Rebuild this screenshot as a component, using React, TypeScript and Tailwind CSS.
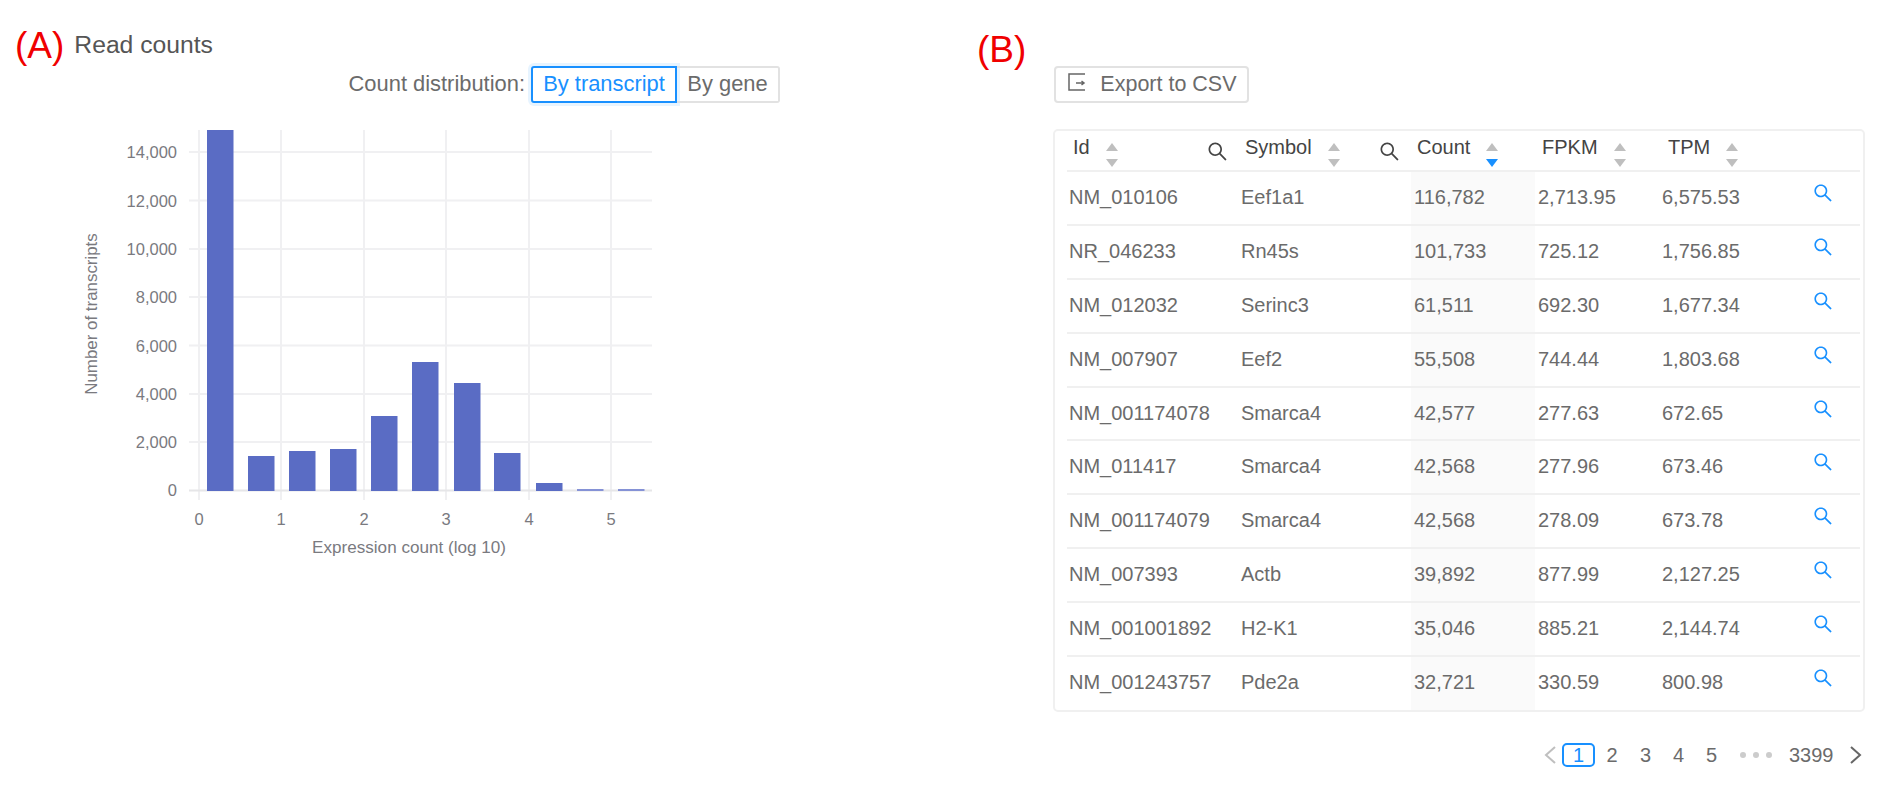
import { AiOutlineSearch } from "react-icons/ai";

const rows = [
  ["NM_010106", "Eef1a1", "116,782", "2,713.95", "6,575.53"],
  ["NR_046233", "Rn45s", "101,733", "725.12", "1,756.85"],
  ["NM_012032", "Serinc3", "61,511", "692.30", "1,677.34"],
  ["NM_007907", "Eef2", "55,508", "744.44", "1,803.68"],
  ["NM_001174078", "Smarca4", "42,577", "277.63", "672.65"],
  ["NM_011417", "Smarca4", "42,568", "277.96", "673.46"],
  ["NM_001174079", "Smarca4", "42,568", "278.09", "673.78"],
  ["NM_007393", "Actb", "39,892", "877.99", "2,127.25"],
  ["NM_001001892", "H2-K1", "35,046", "885.21", "2,144.74"],
  ["NM_001243757", "Pde2a", "32,721", "330.59", "800.98"],
];

const bars = [
  [207, 130], [248, 456], [289, 451], [330, 449], [371, 416], [412, 362],
  [454, 383], [494, 453], [536, 483], [577, 489], [618, 489],
];
const yTicks = [
  ["14,000", 152], ["12,000", 200.5], ["10,000", 249], ["8,000", 297],
  ["6,000", 345.5], ["4,000", 394], ["2,000", 442],
] as const;
const xTicks = [199, 281, 364, 446, 529, 611];

function Chart() {
  return (
    <svg width="600" height="450" viewBox="75 120 600 450" className="block">
      <g stroke="#f0f0f2" strokeWidth="2">
        {yTicks.map(([l, y]) => <line key={l} x1="189" x2="652" y1={y} y2={y} />)}
        {xTicks.map((x) => <line key={x} x1={x} x2={x} y1="130" y2="500" />)}
        <line x1="189" x2="652" y1="490.5" y2="490.5" stroke="#e6e6e8" />
      </g>
      {bars.map(([x, top], i) => (
        <rect key={x} x={x} y={top} width="26.5" height={491 - top} fill={i > 8 ? "#8592d6" : "#5a6cc4"} />
      ))}
      <g fill="#7a7a7f" fontSize="16.5" fontFamily="'Liberation Sans', sans-serif">
        {yTicks.map(([l, y]) => <text key={l} x="177" y={y + 6} textAnchor="end">{l}</text>)}
        <text x="177" y="496" textAnchor="end">0</text>
        {xTicks.map((x, i) => <text key={x} x={x} y="525" textAnchor="middle">{i}</text>)}
        <text x="409" y="553" textAnchor="middle" fontSize="17.1">Expression count (log 10)</text>
        <text x="0" y="0" textAnchor="middle" fontSize="16.9" transform="translate(97 314) rotate(-90)">Number of transcripts</text>
      </g>
    </svg>
  );
}

function SortCarets({ active }: { active?: boolean }) {
  return (
    <svg width="12" height="24" viewBox="0 0 12 24" className="shrink-0">
      <path d="M6 0L12 8H0Z" fill="#bfbfbf" />
      <path d="M0 16H12L6 24Z" fill={active ? "#1890ff" : "#bfbfbf"} />
    </svg>
  );
}

function HeaderCell({ label, active, search, className }: { label: string; active?: boolean; search?: boolean; className: string }) {
  return (
    <th className={"p-0 font-normal text-left border-b-2 border-[#f0f0f0] " + className}>
      <div className="flex items-start h-[39px] pt-[12px]">
        <span className="leading-[20px] text-[#444] mr-[16px] -mt-[6px]">{label}</span>
        <SortCarets active={active} />
        {search && <AiOutlineSearch className="ml-auto mr-[10px] -mt-[3px] text-[#444]" size={23} />}
      </div>
    </th>
  );
}

function PageNum({ n, className }: { n: string; className: string }) {
  return <span className={"text-center " + className}>{n}</span>;
}

function PageArrow({ d, color }: { d: string; color: string }) {
  return (
    <svg width="14" height="20" viewBox="0 0 14 20" fill="none" stroke={color} strokeWidth="2" className="shrink-0">
      <path d={d} />
    </svg>
  );
}

export default function App() {
  return (
    <div className="flex w-[1893px] h-[810px] bg-white text-[#6b6b6b] font-['Liberation_Sans',sans-serif] overflow-hidden">
      <div className="w-[977px] shrink-0 pl-[15px] pt-[26px]">
        <div className="flex items-center h-[40px]">
          <span className="text-[37px] leading-[40px] text-[#f00000]">(A)</span>
          <span className="ml-[10px] -mt-[2px] text-[24.7px] text-[#555]">Read counts</span>
        </div>
        <div className="flex items-center justify-end w-[765px] text-[21.9px]">
          <span className="mr-[6px]">Count distribution:</span>
          <span className="flex items-center justify-center w-[146px] h-[37px] rounded-l-[3px] border-2 border-[#1890ff] text-[#1890ff] shadow-[0_0_0_3px_rgba(24,144,255,0.1)]">By transcript</span>
          <span className="flex items-center justify-center w-[103px] h-[37px] rounded-r-[3px] border-2 border-l-0 border-[#e2e2e2]">By gene</span>
        </div>
        <div className="ml-[60px] mt-[17px]">
          <Chart />
        </div>
      </div>

      <div className="w-[888px] shrink-0">
        <div className="flex items-start h-[129px] pt-[26px]">
          <span className="text-[37px] leading-[44px] mt-[2px] text-[#f00000]">(B)</span>
          <button className="ml-[28px] mt-[40px] flex items-center w-[195px] h-[37px] rounded-[4px] border-2 border-[#e2e2e2] text-[21.5px] pl-[12px]">
            <svg width="18" height="18" viewBox="0 0 18 18" fill="none" stroke="#666" strokeWidth="1.5" className="-mt-[6px]">
              <path d="M17 1H1V17H17" />
              <path d="M8 10H16M13.5 8L16 10L13.5 12" />
            </svg>
            <span className="ml-[14px]">Export to CSV</span>
          </button>
        </div>
        <div className="ml-[76px] w-[812px] h-[583px] rounded-[5px] border-2 border-[#f0f0f0] px-[12px] text-[20px]">
          <table className="w-[793px] table-fixed border-collapse">
            <thead>
              <tr>
                <HeaderCell label="Id" search className="w-[172px] pl-[6px]" />
                <HeaderCell label="Symbol" search className="w-[172px] pl-[6px]" />
                <HeaderCell label="Count" active className="w-[124px] pl-[6px]" />
                <HeaderCell label="FPKM" className="w-[125px] pl-[7px]" />
                <HeaderCell label="TPM" className="w-[130px] pl-[8px]" />
                <th className="p-0 border-b-2 border-[#f0f0f0]" />
              </tr>
            </thead>
            <tbody>
              {rows.map((r, i) => (
                <tr key={r[0]} className={i < 9 ? "h-[53.9px] border-b-2 border-[#f0f0f0]" : "h-[53.9px]"}>
                  <td className="p-0 pl-[2px] pb-[2px]">{r[0]}</td>
                  <td className="p-0 pl-[2px] pb-[2px]">{r[1]}</td>
                  <td className="p-0 pl-[3px] pb-[2px] bg-[#fafafa]">{r[2]}</td>
                  <td className="p-0 pl-[3px] pb-[2px]">{r[3]}</td>
                  <td className="p-0 pl-[2px] pb-[2px]">{r[4]}</td>
                  <td className="p-0 pl-[22px]">
                    <AiOutlineSearch className="text-[#1890ff] -mt-[10px]" size={22} />
                  </td>
                </tr>
              ))}
            </tbody>
          </table>
        </div>
        <div className="flex items-center h-[26px] mt-[30px] ml-[566px] text-[20px]">
          <PageArrow d="M12 2L3 10L12 18" color="#bfbfbf" />
          <span className="ml-[5px] w-[33px] h-[24px] rounded-[5px] border-2 border-[#1890ff] text-[#1890ff] flex items-center justify-center">1</span>
          <PageNum n="2" className="w-[34px]" />
          <PageNum n="3" className="w-[33px]" />
          <PageNum n="4" className="w-[33px]" />
          <PageNum n="5" className="w-[33px]" />
          <span className="flex gap-[7px] ml-[12px] mr-[17px]">
            <i className="w-[6px] h-[6px] rounded-full bg-[#ccc]" />
            <i className="w-[6px] h-[6px] rounded-full bg-[#ccc]" />
            <i className="w-[6px] h-[6px] rounded-full bg-[#ccc]" />
          </span>
          <PageNum n="3399" className="w-[44px]" />
          <span className="ml-[16px]">
            <PageArrow d="M2 2L11 10L2 18" color="#666" />
          </span>
        </div>
      </div>
    </div>
  );
}
